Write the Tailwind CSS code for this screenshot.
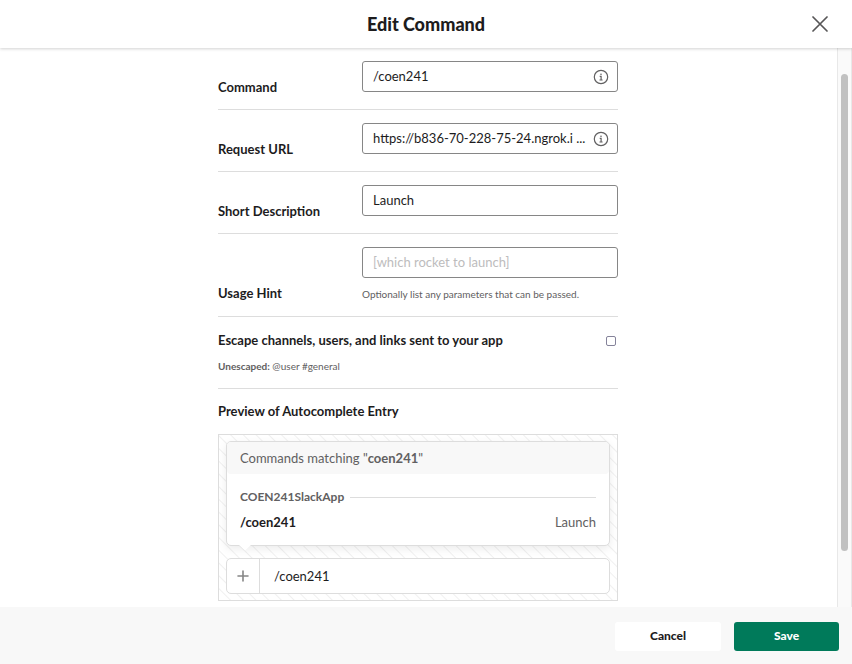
<!DOCTYPE html>
<html lang="en">
<head>
<meta charset="utf-8">
<meta name="viewport" content="width=device-width, initial-scale=1">
<title>Edit Command</title>
<script src="https://cdn.jsdelivr.net/npm/@tailwindcss/browser@4"></script>
</head>
<body class="flex h-screen flex-col overflow-hidden bg-white font-['Lato',sans-serif] text-[13px] leading-5 text-[#1d1c1d]">
  <header class="relative z-10 flex h-12 shrink-0 items-center justify-center bg-white shadow-[0_1px_3px_rgba(0,0,0,0.18)]">
    <h1 class="text-lg font-black">Edit Command</h1>
    <button type="button" aria-label="Close" class="absolute right-5 flex size-6 items-center justify-center">
      <svg class="size-4" viewBox="0 0 16 16" fill="none" stroke="#575657" stroke-width="1.7" stroke-linecap="round"><path d="M1 1l14 14M15 1L1 15"/></svg>
    </button>
  </header>

  <div class="flex min-h-0 flex-1">
    <main class="min-w-0 flex-1 overflow-hidden pr-px">
      <form id="command-form" class="mx-auto w-full max-w-[400px]">
        <div class="flex items-end border-b border-[#dddddd] pt-[13px] pb-3">
          <label for="command" class="w-36 font-bold">Command</label>
          <div class="relative mb-[5px] flex-1">
            <input id="command" type="text" value="/coen241" class="block h-[31px] w-full rounded-[3px] border border-[#868686] bg-white pr-8 pb-[2px] pl-[10px]">
            <svg class="absolute top-2 right-[9px] size-4" viewBox="0 0 16 16" fill="none" stroke="#616061" stroke-width="1.2"><circle cx="8" cy="8" r="6.7"/><path d="M6.7 7.3H8.1V11M6.5 11H9.6"/><circle cx="8" cy="5.2" r=".8" fill="#616061" stroke="none"/></svg>
          </div>
        </div>

        <div class="flex items-end border-b border-[#dddddd] pt-[13px] pb-3">
          <label for="url" class="w-36 font-bold">Request URL</label>
          <div class="relative mb-[5px] flex-1">
            <input id="url" type="text" value="https://b836-70-228-75-24.ngrok.i ..." class="block h-[31px] w-full rounded-[3px] border border-[#868686] bg-white pr-[30px] pb-[2px] pl-[10px]">
            <svg class="absolute top-2 right-[9px] size-4" viewBox="0 0 16 16" fill="none" stroke="#616061" stroke-width="1.2"><circle cx="8" cy="8" r="6.7"/><path d="M6.7 7.3H8.1V11M6.5 11H9.6"/><circle cx="8" cy="5.2" r=".8" fill="#616061" stroke="none"/></svg>
          </div>
        </div>

        <div class="flex items-end border-b border-[#dddddd] pt-[13px] pb-3">
          <label for="description" class="w-36 font-bold">Short Description</label>
          <div class="mb-[5px] flex-1">
            <input id="description" type="text" value="Launch" class="block h-[31px] w-full rounded-[3px] border border-[#868686] bg-white px-[10px] pb-[2px]">
          </div>
        </div>

        <div class="flex items-end border-b border-[#dddddd] pt-[13px] pb-[13px]">
          <label for="hint" class="w-36 font-bold">Usage Hint</label>
          <div class="mb-px flex-1">
            <input id="hint" type="text" placeholder="[which rocket to launch]" aria-describedby="hint-help" class="block h-[31px] w-full rounded-[3px] border border-[#868686] bg-white px-[10px] pb-[2px] placeholder:text-[#bdbcbd]">
            <p id="hint-help" class="mt-2 text-[10px] leading-4 text-[#616061]">Optionally list any parameters that can be passed.</p>
          </div>
        </div>

        <div class="border-b border-[#dddddd] pt-[13px] pb-[14px]">
          <div class="flex items-end justify-between">
            <label for="escape" class="font-bold">Escape channels, users, and links sent to your app</label>
            <input id="escape" type="checkbox" class="mr-[2px] mb-1 size-[10px] appearance-none rounded-[2px] border border-[#85839a] bg-white checked:bg-[#007a5a]">
          </div>
          <p class="mt-2 text-[10px] leading-4 text-[#616061]"><b>Unescaped:</b> @user #general</p>
        </div>

        <h2 class="mt-3 font-bold">Preview of Autocomplete Entry</h2>
        <div class="mt-[13px] border border-[#dddddd] bg-[repeating-linear-gradient(45deg,#fff_0px,#fff_7px,#f0f0f0_8px,#fff_9px)] px-[7px] py-[6px]">
          <div class="relative rounded-[5px] border border-[#dddddd] bg-white shadow-[0_3px_8px_rgba(0,0,0,0.08)]">
            <p class="rounded-[4px] bg-[#f8f8f8] px-[13px] py-[6px] text-[#616061]">Commands matching "<b>coen241</b>"</p>
            <div class="px-[13px] pt-[13px] pb-[13px]">
              <div class="flex items-center gap-[6px] text-xs leading-5 font-bold text-[#616061]">COEN241SlackApp<span class="h-px flex-1 bg-[#dddddd]"></span></div>
              <div class="mt-[5px] flex justify-between"><b>/coen241</b><span class="text-[#616061]">Launch</span></div>
            </div>
            <svg class="absolute top-full left-3 h-[6px] w-3 overflow-visible" viewBox="0 0 12 6" fill="#fff"><path d="M0-1.500V0L6 5.500L12 0V-1.500Z"/></svg>
          </div>
          <div class="mt-3 flex h-9 items-stretch rounded-[5px] border border-[#dddddd] bg-white">
            <span class="flex w-[33px] items-center justify-center border-r border-[#dddddd]">
              <svg class="size-3" viewBox="0 0 12 12" fill="none" stroke="#868686" stroke-width="1.6" stroke-linecap="round"><path d="M6 1v10M1 6h10"/></svg>
            </span>
            <span class="flex items-center px-[14px]">/coen241</span>
          </div>
        </div>
      </form>
    </main>
    <div class="w-[15px] shrink-0 border-x border-[#e8e8e8] bg-[#fafafa] px-[3px] pt-[26px] pb-14" aria-hidden="true">
      <div class="h-full rounded-full bg-[#c1c1c1]"></div>
    </div>
  </div>

  <footer class="flex h-[57px] shrink-0 items-start justify-end gap-[13px] bg-[#f8f8f8] pt-[15px] pr-[13px] text-xs">
    <button type="button" class="h-[29px] w-[106px] rounded-[3px] bg-white pb-[2px] font-black">Cancel</button>
    <button type="submit" form="command-form" class="h-[29px] w-[105px] rounded-[3px] bg-[#007a5a] pb-[2px] font-black text-white">Save</button>
  </footer>
</body>
</html>
